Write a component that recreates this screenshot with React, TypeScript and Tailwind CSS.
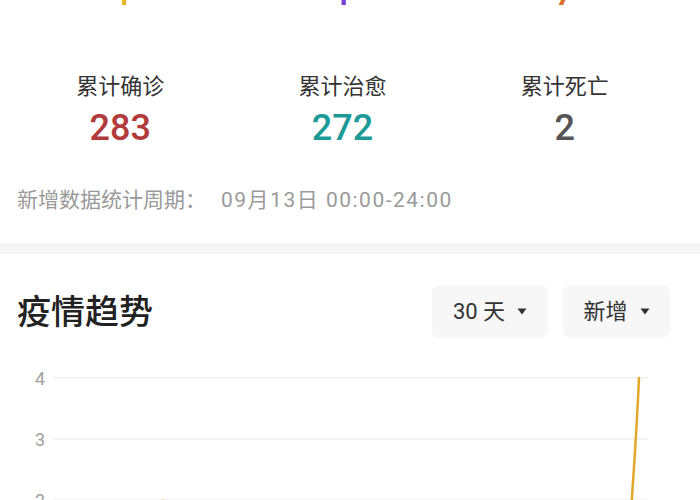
import React from 'react';

const FONT = { fontFamily: 'Roboto, "Noto Sans CJK SC", sans-serif' };

const totals = [
  { label: '累计确诊', value: '283', color: 'text-[#b13b3b]' },
  { label: '累计治愈', value: '272', color: 'text-[#1c9a97]' },
  { label: '累计死亡', value: '2', color: 'text-[#555555]' },
];

const Caret = () => (
  <svg width="10" height="7" viewBox="0 0 10 7" className="shrink-0">
    <path d="M0.5 0.5 L9.5 0.5 L5 6.5 Z" fill="#333333" />
  </svg>
);

const Dropdown: React.FC<{ label: string; width: string }> = ({ label, width }) => (
  <div className={`${width} h-[53px] rounded-[8px] bg-[#f7f7f7] flex items-center justify-center gap-[12px]`}>
    <span className="text-[22px] leading-[30px] text-[#333333]">{label}</span>
    <Caret />
  </div>
);

const TrendChart = () => (
  <svg width="700" height="162" viewBox="0 0 700 162" className="block">
    {[
      { y: 40, v: '4' },
      { y: 101, v: '3' },
      { y: 162, v: '2' },
    ].map((g) => (
      <g key={g.v}>
        <line x1="53" x2="648" y1={g.y} y2={g.y} stroke="#f0f0f0" strokeWidth="1.5" />
        <text x="45" y={g.y + 7} textAnchor="end" fontSize="18" fill="#a0a0a0" style={FONT}>
          {g.v}
        </text>
      </g>
    ))}
    <path d="M148 172 Q163 154 178 172" fill="none" stroke="#e2a82b" strokeWidth="2.5" />
    <path d="M627 232 C631 170 636 110 639 40" fill="none" stroke="#e2a82b" strokeWidth="2.5" strokeLinecap="round" />
  </svg>
);

export default function App() {
  return (
    <div className="w-[700px] h-[500px] overflow-hidden bg-white" style={FONT}>
      {/* new-case numbers, scrolled mostly out of view */}
      <div className="grid grid-cols-3 pl-[9px] pr-[24px] -mt-[25px] h-[36px] text-[36px] leading-[36px] font-medium text-center">
        <span className="text-[#e8b622]">4</span>
        <span className="text-[#7a3fd6]">1</span>
        <span className="text-[#d8722c]">7</span>
      </div>

      <div className="grid grid-cols-3 pl-[9px] pr-[24px] mt-[61px] text-center">
        {totals.map((t) => (
          <div key={t.label} className="flex flex-col items-center">
            <span className="text-[22px] leading-[30px] text-[#333333]">{t.label}</span>
            <span className={`mt-[8px] text-[36px] leading-[36px] font-medium ${t.color}`}>{t.value}</span>
          </div>
        ))}
      </div>

      <div className="mt-[39px] pl-[17px] text-[21px] leading-[30px] text-[#9a9a9a] flex">
        <span>新增数据统计周期：</span>
        <span className="ml-[15px] tracking-[1.5px]">09月13日 00:00-24:00</span>
      </div>

      <div className="mt-[28px] h-[11px] bg-[#f5f5f5]" />

      <div className="mt-[31px] flex items-center pl-[17px] pr-[30px]">
        <h2 className="text-[34px] leading-[40px] font-medium text-[#222222]">疫情趋势</h2>
        <div className="ml-auto flex gap-[15px]">
          <Dropdown label="30 天" width="w-[116px]" />
          <Dropdown label="新增" width="w-[107px]" />
        </div>
      </div>

      <TrendChart />
    </div>
  );
}
